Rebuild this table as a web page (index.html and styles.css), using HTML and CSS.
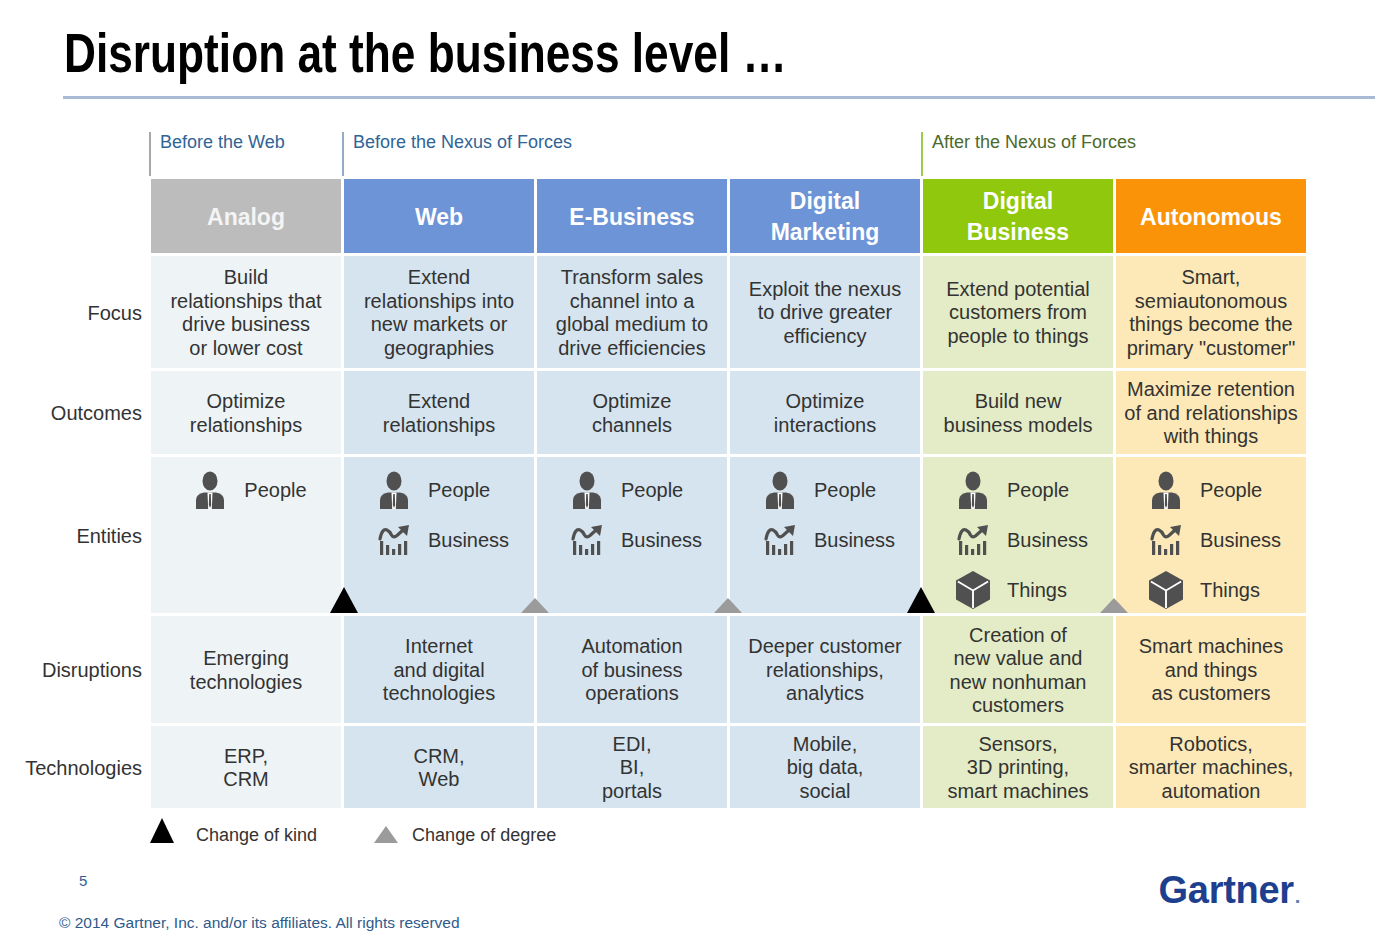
FILE: index.html
```html
<!DOCTYPE html>
<html lang="en">
<head>
<meta charset="utf-8">
<title>Disruption at the business level</title>
<link rel="stylesheet" href="styles.css">
</head>
<body>
<svg class="defs" width="0" height="0" aria-hidden="true">
  <symbol id="i-person" viewBox="0 0 28 38">
    <ellipse cx="14" cy="10" rx="7.5" ry="9.5" fill="#505050"/>
    <path d="M0 38 V29 Q0 23 8 21.5 L20 21.5 Q28 23 28 29 V38 Z" fill="#505050"/>
    <polygon points="11.5,21.5 16.5,21.5 15.8,38 12.2,38" fill="#fff"/>
    <polygon points="13.2,23 14.8,23 15.2,34 14,37 12.8,34" fill="#505050"/>
  </symbol>
  <symbol id="i-business" viewBox="0 0 32 30">
    <path d="M2 14 Q4 3 9 5 Q11.5 6 13.5 10 Q15.5 13.5 19 10.5 L24 6" fill="none" stroke="#505050" stroke-width="3.2" stroke-linecap="round"/>
    <polygon points="20,2 31,0 29,11" fill="#505050"/>
    <rect x="2" y="16" width="3.2" height="14" fill="#505050"/>
    <rect x="8" y="20" width="3.2" height="10" fill="#505050"/>
    <rect x="14" y="24" width="3.2" height="6" fill="#505050"/>
    <rect x="20" y="19" width="3.2" height="11" fill="#505050"/>
    <rect x="26" y="16" width="3.2" height="14" fill="#505050"/>
  </symbol>
  <symbol id="i-cube" viewBox="0 0 36 40">
    <polygon points="18,0 36,10 36,30 18,40 0,30 0,10" fill="#505050"/>
    <polyline points="2,11 18,20.5 34,11" fill="none" stroke="#fff" stroke-width="2"/>
    <line x1="18" y1="20.5" x2="18" y2="39" stroke="#fff" stroke-width="2"/>
  </symbol>
</svg>

<h1 class="title"><span>Disruption at the business level …</span></h1>
<div class="rule"></div>

<div class="eras">
  <div class="era era-web">Before the Web</div>
  <div class="era era-before">Before the Nexus of Forces</div>
  <div class="era era-after">After the Nexus of Forces</div>
</div>

<div class="grid">
  <div></div>
  <div class="hd hd-grey">Analog</div>
  <div class="hd hd-blue">Web</div>
  <div class="hd hd-blue">E-Business</div>
  <div class="hd hd-blue">Digital<br>Marketing</div>
  <div class="hd hd-green">Digital<br>Business</div>
  <div class="hd hd-orange">Autonomous</div>

  <div class="lbl">Focus</div>
  <div class="c c-grey">Build<br>relationships that<br>drive business<br>or lower cost</div>
  <div class="c c-blue">Extend<br>relationships into<br>new markets or<br>geographies</div>
  <div class="c c-blue">Transform sales<br>channel into a<br>global medium to<br>drive efficiencies</div>
  <div class="c c-blue">Exploit the nexus<br>to drive greater<br>efficiency</div>
  <div class="c c-green">Extend potential<br>customers from<br>people to things</div>
  <div class="c c-orange">Smart,<br>semiautonomous<br>things become the<br>primary "customer"</div>

  <div class="lbl">Outcomes</div>
  <div class="c c-grey">Optimize<br>relationships</div>
  <div class="c c-blue">Extend<br>relationships</div>
  <div class="c c-blue">Optimize<br>channels</div>
  <div class="c c-blue">Optimize<br>interactions</div>
  <div class="c c-green">Build new<br>business models</div>
  <div class="c c-orange">Maximize retention<br>of and relationships<br>with things</div>

  <div class="lbl">Entities</div>
  <div class="ent c-grey">
    <ul class="ent-list">
      <li><span class="ico"><svg class="i-person"><use href="#i-person"/></svg></span>People</li>
    </ul>
  </div>
  <div class="ent c-blue">
    <span class="tri tri-kind tri-first"></span>
    <ul class="ent-list">
      <li><span class="ico"><svg class="i-person"><use href="#i-person"/></svg></span>People</li>
      <li><span class="ico"><svg class="i-business"><use href="#i-business"/></svg></span>Business</li>
    </ul>
  </div>
  <div class="ent c-blue">
    <span class="tri tri-degree"></span>
    <ul class="ent-list">
      <li><span class="ico"><svg class="i-person"><use href="#i-person"/></svg></span>People</li>
      <li><span class="ico"><svg class="i-business"><use href="#i-business"/></svg></span>Business</li>
    </ul>
  </div>
  <div class="ent c-blue">
    <span class="tri tri-degree"></span>
    <ul class="ent-list">
      <li><span class="ico"><svg class="i-person"><use href="#i-person"/></svg></span>People</li>
      <li><span class="ico"><svg class="i-business"><use href="#i-business"/></svg></span>Business</li>
    </ul>
  </div>
  <div class="ent c-green">
    <span class="tri tri-kind"></span>
    <ul class="ent-list">
      <li><span class="ico"><svg class="i-person"><use href="#i-person"/></svg></span>People</li>
      <li><span class="ico"><svg class="i-business"><use href="#i-business"/></svg></span>Business</li>
      <li><span class="ico"><svg class="i-cube"><use href="#i-cube"/></svg></span>Things</li>
    </ul>
  </div>
  <div class="ent c-orange">
    <span class="tri tri-degree"></span>
    <ul class="ent-list">
      <li><span class="ico"><svg class="i-person"><use href="#i-person"/></svg></span>People</li>
      <li><span class="ico"><svg class="i-business"><use href="#i-business"/></svg></span>Business</li>
      <li><span class="ico"><svg class="i-cube"><use href="#i-cube"/></svg></span>Things</li>
    </ul>
  </div>

  <div class="lbl">Disruptions</div>
  <div class="c c-grey">Emerging<br>technologies</div>
  <div class="c c-blue">Internet<br>and digital<br>technologies</div>
  <div class="c c-blue">Automation<br>of business<br>operations</div>
  <div class="c c-blue">Deeper customer<br>relationships,<br>analytics</div>
  <div class="c c-green">Creation of<br>new value and<br>new nonhuman<br>customers</div>
  <div class="c c-orange">Smart machines<br>and things<br>as customers</div>

  <div class="lbl">Technologies</div>
  <div class="c c-grey">ERP,<br>CRM</div>
  <div class="c c-blue">CRM,<br>Web</div>
  <div class="c c-blue">EDI,<br>BI,<br>portals</div>
  <div class="c c-blue">Mobile,<br>big data,<br>social</div>
  <div class="c c-green">Sensors,<br>3D printing,<br>smart machines</div>
  <div class="c c-orange">Robotics,<br>smarter machines,<br>automation</div>
</div>

<div class="legend">
  <div class="legend-item"><span class="ltri ltri-kind"></span><span class="ltxt">Change of kind</span></div>
  <div class="legend-item legend-degree"><span class="ltri ltri-degree"></span><span class="ltxt ltxt-degree">Change of degree</span></div>
</div>

<footer class="footer">
  <div class="foot-left">
    <div class="pagenum">5</div>
    <div class="copy">© 2014 Gartner, Inc. and/or its affiliates. All rights reserved</div>
  </div>
  <div class="logo">Gartner<span class="logo-dot">.</span></div>
</footer>
</body>
</html>
```

FILE: styles.css
```css
* { box-sizing: border-box; }

html, body {
  margin: 0;
  padding: 0;
}

body {
  width: 1392px;
  height: 952px;
  overflow: hidden;
  background: #fff;
  color: #333;
  font-family: "Liberation Sans", Arial, sans-serif;
}

.defs {
  position: absolute;
  width: 0;
  height: 0;
  overflow: hidden;
}

.title {
  margin: 25px 0 0 64px;
  height: 56px;
  font-size: 56px;
  line-height: 56px;
  font-weight: bold;
  color: #000;
  white-space: nowrap;
}

.title span {
  display: inline-block;
  transform: scaleX(0.79);
  transform-origin: left center;
}

.rule {
  margin: 15px 0 0 63px;
  width: 1312px;
  height: 3px;
  background: #a9bad5;
}

.eras {
  display: grid;
  grid-template-columns: 148px repeat(6, 190px);
  column-gap: 3px;
  margin-top: 33px;
  height: 44px;
}

.era {
  margin-left: -2px;
  padding-left: 9px;
  border-left: 2px solid #a5a5a5;
  font-size: 18px;
  line-height: 20px;
  color: #2f6496;
  white-space: nowrap;
}

.era-web {
  grid-column: 2;
  border-left-color: #a8a8a8;
}

.era-before {
  grid-column: 3 / span 3;
  border-left-color: #93abc9;
}

.era-after {
  grid-column: 6 / span 2;
  border-left-color: #9ccb45;
  color: #4b6a2c;
}

.grid {
  display: grid;
  grid-template-columns: 148px repeat(6, 190px);
  grid-template-rows: 74px 112px 83px 156px 107px 82px;
  column-gap: 3px;
  row-gap: 3px;
  margin-top: 3px;
}

.hd {
  display: flex;
  align-items: center;
  justify-content: center;
  text-align: center;
  color: #fff;
  font-weight: bold;
  font-size: 23px;
  line-height: 31px;
  padding-top: 2px;
}

.hd-grey { background: #bcbcbc; color: #f4f4f4; }
.hd-blue { background: #6c94d6; }
.hd-green { background: #8fc80c; }
.hd-orange { background: #fb9308; }

.c {
  position: relative;
  display: flex;
  align-items: center;
  justify-content: center;
  text-align: center;
  font-size: 20px;
  line-height: 23.5px;
  color: #333;
  padding-top: 2px;
}

.c-grey { background: #eef4f6; }
.c-blue { background: #d5e4ee; }
.c-green { background: #e3ecc6; }
.c-orange { background: #fce9b7; }

.lbl {
  display: flex;
  align-items: center;
  justify-content: flex-end;
  padding-right: 6px;
  padding-top: 2px;
  font-size: 20px;
  color: #333;
}

.ent {
  position: relative;
  display: flex;
  justify-content: center;
  align-items: flex-start;
  padding: 8px 0 0 8px;
}

.ent-list {
  list-style: none;
  margin: 0;
  padding: 0;
  display: flex;
  flex-direction: column;
}

.ent-list li {
  display: flex;
  align-items: center;
  height: 50px;
  font-size: 20px;
  color: #333;
}

.ico {
  display: flex;
  align-items: center;
  justify-content: center;
  width: 34px;
  margin-right: 17px;
}

.i-person { width: 28px; height: 38px; }
.i-business { width: 32px; height: 30px; }
.i-cube { width: 35px; height: 40px; }

.tri {
  position: absolute;
  bottom: 0;
  left: -16px;
  width: 0;
  height: 0;
  border-left: 14px solid transparent;
  border-right: 14px solid transparent;
}

.tri-kind { border-bottom: 26px solid #000; }
.tri-first { left: -14px; }
.tri-degree { border-bottom: 15px solid #9b9b9b; }

.legend {
  display: flex;
  align-items: flex-end;
  margin-top: 10px;
  padding-left: 150px;
  height: 25px;
}

.legend-item {
  display: flex;
  align-items: flex-end;
}

.legend-degree {
  margin-left: 57px;
}

.ltri {
  width: 0;
  height: 0;
  border-left: 12px solid transparent;
  border-right: 12px solid transparent;
}

.ltri-kind { border-bottom: 25px solid #000; }
.ltri-degree { border-bottom: 17px solid #9b9b9b; }

.ltxt {
  margin-left: 22px;
  font-size: 18px;
  line-height: 20px;
  color: #333;
  position: relative;
  top: 2px;
}

.ltxt-degree { margin-left: 14px; }

.footer {
  display: flex;
  justify-content: space-between;
  align-items: flex-start;
  margin-top: 28px;
  padding: 0 92px 0 59px;
}

.foot-left {
  display: flex;
  flex-direction: column;
}

.pagenum {
  margin: 2px 0 0 20px;
  font-size: 15px;
  line-height: 16px;
  color: #2f5f96;
}

.copy {
  margin-top: 26px;
  font-size: 15.5px;
  line-height: 16px;
  color: #2f5a8c;
  white-space: nowrap;
}

.logo {
  font-size: 38px;
  line-height: 38px;
  font-weight: bold;
  color: #1d3f8e;
  letter-spacing: -0.3px;
}

.logo-dot {
  font-size: 20px;
  color: #5a7fb5;
  margin-left: 1px;
}
```
